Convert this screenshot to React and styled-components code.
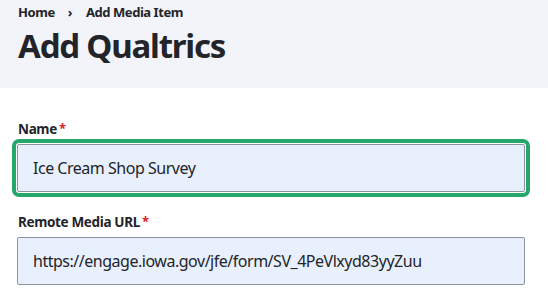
import React from "react";
import styled, { createGlobalStyle } from "styled-components";

const GlobalStyle = createGlobalStyle`
  body {
    margin: 0;
    background: #ffffff;
    font-family: "Noto Sans", "Open Sans", sans-serif;
    color: #232429;
  }
`;

const Header = styled.header`
  background-color: #f3f4f9;
  height: 88px;
  padding: 0 18px;
  box-sizing: border-box;
`;

const Breadcrumb = styled.nav`
  display: flex;
  align-items: center;
  height: 24px;
  font-size: 13px;
  font-weight: 700;
  letter-spacing: -0.45px;
  color: #232429;
`;

const Crumb = styled.span`
  line-height: 24px;
`;

const Separator = styled.span`
  display: inline-block;
  margin: 0 14px 0 13px;
  font-size: 13px;
`;

const Title = styled.h1`
  margin: 0;
  font-size: 33px;
  line-height: 44px;
  font-weight: 700;
  letter-spacing: -1.2px;
  color: #232429;
`;

const Form = styled.form`
  padding: 30px 23px 0 17px;
  display: flex;
  flex-direction: column;
  gap: 19px;
`;

const Field = styled.div`
  display: flex;
  flex-direction: column;
`;

const Label = styled.label`
  font-size: 13.5px;
  font-weight: 700;
  line-height: 20px;
  letter-spacing: -0.35px;
  margin-left: 1px;
  margin-bottom: 5px;
  color: #232429;
`;

const Required = styled.span`
  color: #dc2323;
  margin-left: 2px;
  font-size: 13px;
  vertical-align: 1px;
`;

const Input = styled.input`
  box-sizing: border-box;
  height: 48px;
  width: 508px;
  padding: 0 15px;
  font-family: inherit;
  font-size: 16px;
  letter-spacing: -0.48px;
  color: #232429;
  background-color: #e8f0fe;
  border: 1px solid #8e929c;
  border-radius: 2px;
  outline: ${(p) => (p.$focused ? "4px solid #26a769" : "none")};
  outline-offset: 1px;
`;

export default function App() {
  return (
    <>
      <GlobalStyle />
      <Header>
        <Breadcrumb>
          <Crumb>Home</Crumb>
          <Separator>›</Separator>
          <Crumb>Add Media Item</Crumb>
        </Breadcrumb>
        <Title>Add Qualtrics</Title>
      </Header>
      <Form>
        <Field>
          <Label>
            Name<Required>*</Required>
          </Label>
          <Input $focused defaultValue="Ice Cream Shop Survey" />
        </Field>
        <Field>
          <Label>
            Remote Media URL<Required>*</Required>
          </Label>
          <Input defaultValue="https://engage.iowa.gov/jfe/form/SV_4PeVlxyd83yyZuu" />
        </Field>
      </Form>
    </>
  );
}
